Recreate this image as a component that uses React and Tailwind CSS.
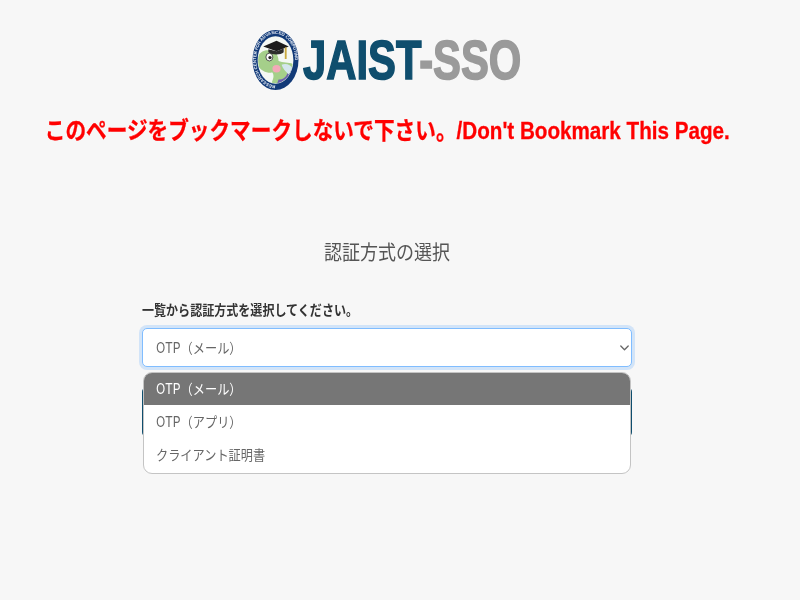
import React from "react";

const sans = "font-['Inter','Noto_Sans_CJK_JP',sans-serif]";

function Badge() {
  return (
    <svg width="47" height="62" viewBox="0 0 46 64" preserveAspectRatio="none" className="shrink-0 blur-[0.4px]">
      <defs>
        <path id="ring" d="M23 58 A 19 26.5 0 1 1 23.1 58" />
        <clipPath id="inner"><ellipse cx="23" cy="32" rx="17" ry="24" /></clipPath>
      </defs>
      <ellipse cx="23" cy="32" rx="22.5" ry="31" fill="#123a78" />
      <ellipse cx="23" cy="32" rx="17.5" ry="24.5" fill="#f4f8f4" />
      <text fontSize="4.4" fontWeight="700" fill="#e8eef6" fontFamily="'Liberation Sans',sans-serif">
        <textPath href="#ring">RESEARCH CENTER FOR ADVANCED COMPUTING</textPath>
      </text>
      <g clipPath="url(#inner)">
        <path d="M5 34 C5 26 10 21 17 22 C23 23 26 27 26 33 C30 35 36 34 40 36 L40 58 L18 58 C21 52 22 48 20 45 C13 46 5 41 5 34Z" fill="#a5cf8a" />
        <path d="M26 52 C32 53 35 47 36 41 L41 42 L41 58 L24 58Z" fill="#6a5fb0" />
        <path d="M29 37 C33 35 38 37 40 41 L36 47 C33 44 30 41 29 37Z" fill="#d4e6ee" />
        <ellipse cx="24" cy="41" rx="4" ry="3.8" fill="#f4a9b8" />
        <ellipse cx="17" cy="29" rx="3.4" ry="4" fill="#fff" stroke="#333" strokeWidth="0.8" />
        <circle cx="17.6" cy="29.5" r="1.6" fill="#222" />
      </g>
      <path d="M11 18 L24 12 L36 18 L24 23Z" fill="#1c1c1c" />
      <path d="M16 21 L16 24 C20 27 28 27 31 24 L31 20 L24 23Z" fill="#2d2d2d" />
      <path d="M33 19 L33 31" stroke="#c9a93f" strokeWidth="1.8" />
    </svg>
  );
}

export default function App() {
  return (
    <div className={`min-h-[600px] w-full bg-[#f7f7f7] ${sans}`}>
      <div className="w-[774px]">
        <div className="flex h-[100px] items-center justify-center pt-[20px]">
          <div className="flex w-[270px] items-center gap-[4px]">
            <Badge />
            <div className="w-[218px] shrink-0">
              <div className="origin-left scale-x-[0.76] whitespace-nowrap font-['Liberation_Sans',sans-serif] text-[55px] leading-none font-bold [-webkit-text-stroke:1.6px] blur-[0.4px]">
                <span className="text-[#0f4e6e]">JAIST</span>
                <span className="text-[#9a9a9a]">-SSO</span>
              </div>
            </div>
          </div>
        </div>
        <h1 className="mt-[13px] flex justify-center font-['Liberation_Sans','Noto_Sans_CJK_JP',sans-serif] text-[24px] leading-[36px] font-bold text-[#ff0000] [-webkit-text-stroke:0.3px]">
          <span className="shrink-0 scale-x-[0.86] whitespace-nowrap">このページをブックマークしないで下さい。/Don't Bookmark This Page.</span>
        </h1>
        <h2 className="mt-[89px] scale-x-[0.9] text-center text-[20px] leading-[30px] font-normal text-[#555]">
          認証方式の選択
        </h2>
        <div className="relative mx-auto mt-[32px] w-[490px]">
          <label className="block origin-left scale-x-[0.86] text-[14px] leading-[20px] font-bold whitespace-nowrap text-[#333]">
            一覧から認証方式を選択してください。
          </label>
          <div className="mt-[8px] flex h-[39px] items-center justify-between rounded-[5px] border border-[#80bdff] bg-white pr-[2px] pl-[13px] text-[14px] text-[#666] shadow-[0_0_0_3px_rgba(0,123,255,0.15)]">
            <span className="origin-left scale-x-[0.87]">OTP（メール）</span>
            <svg width="9" height="6" viewBox="0 0 9 6" fill="none" stroke="#666" strokeWidth="1.3" strokeLinecap="round" strokeLinejoin="round">
              <path d="M0.8 1 L4.5 4.7 L8.2 1" />
            </svg>
          </div>
          <div className="mt-[21px] h-[48px] rounded-[4px] bg-[#0f4e6e]" />
          <div className="absolute top-[72px] right-[1px] left-[1px] overflow-hidden rounded-[9px] border border-[#c4c4c4] bg-white text-[14px] text-[#666]">
            <div className="flex h-[32px] items-center bg-[#767676] pb-[2px] pl-[12px] text-white"><span className="origin-left scale-x-[0.87]">OTP（メール）</span></div>
            <div className="flex h-[34px] items-center pb-[2px] pl-[12px]"><span className="origin-left scale-x-[0.87]">OTP（アプリ）</span></div>
            <div className="flex h-[34px] items-center pb-[3px] pl-[12px]"><span className="origin-left scale-x-[0.87]">クライアント証明書</span></div>
          </div>
        </div>
      </div>
    </div>
  );
}
